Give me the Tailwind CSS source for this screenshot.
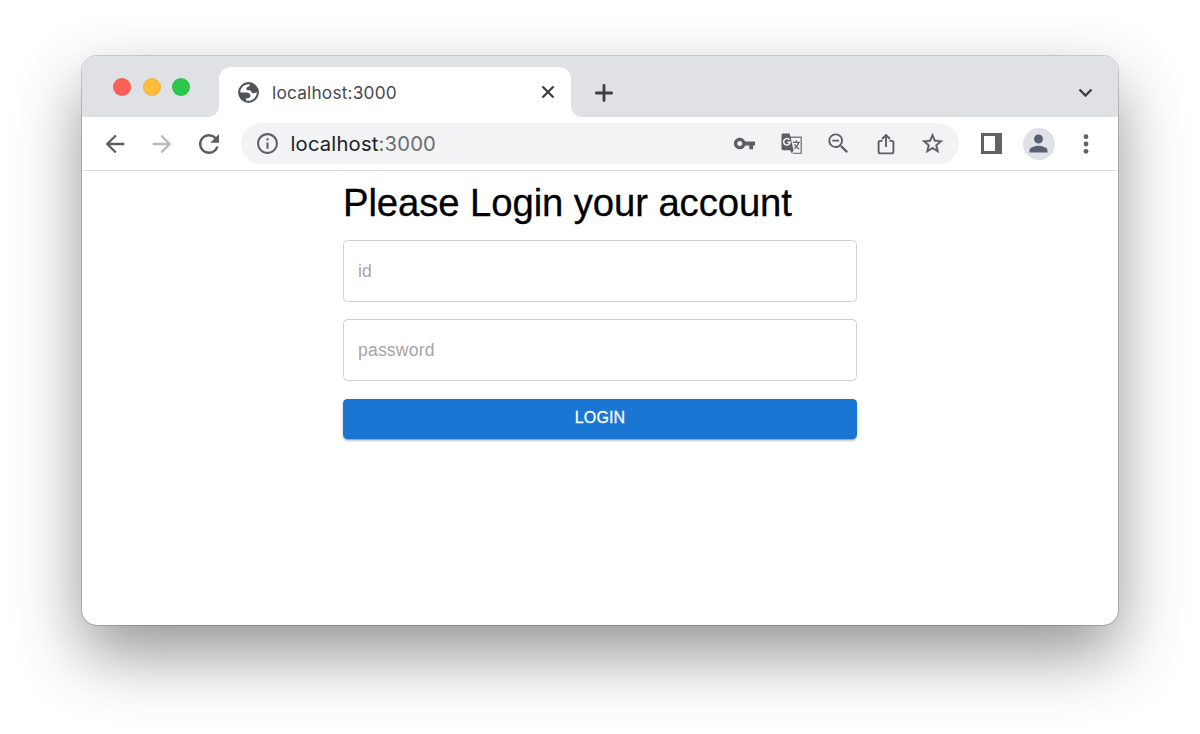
<!DOCTYPE html>
<html lang="en">
<head>
  <meta charset="UTF-8" />
  <meta name="viewport" content="width=device-width, initial-scale=1.0" />
  <title>localhost:3000</title>
  <script src="https://cdn.jsdelivr.net/npm/@tailwindcss/browser@4"></script>
</head>
<body class="bg-white h-[734px] overflow-hidden px-[82px] pt-[56px]">
  <!-- Browser window -->
  <div class="h-[569px] rounded-[15px] overflow-hidden bg-white flex flex-col shadow-[0_0_0_1px_rgba(0,0,0,0.17),0_29px_66px_rgba(0,0,0,0.42)] font-['Inter',sans-serif]">

    <!-- Tab strip -->
    <div class="flex h-[61px] shrink-0">
      <div class="w-[137px] bg-[#dfe1e5] rounded-br-[11px] flex gap-[11.5px] pl-[31px] pt-[22px]">
        <span class="size-[18px] rounded-full bg-[#ff5f57] border border-[#e2544c]/40"></span>
        <span class="size-[18px] rounded-full bg-[#febc3b] border border-[#dda035]/40"></span>
        <span class="size-[18px] rounded-full bg-[#2bc84c] border border-[#25ac40]/40"></span>
      </div>
      <div class="w-[352px] h-[30px] bg-[#dfe1e5] pt-[11px]">
        <div class="h-[50px] bg-white rounded-t-[12px] flex items-center pl-[17px] pr-[16px]">
          <svg class="size-[25px]" viewBox="0 0 24 24">
            <circle cx="12" cy="12" r="10" fill="#50535a"/>
            <path d="M4 12A8 8 0 0 1 13.500 4.200c-.200 1.200-.900 2-2.200 2.400-1.500.400-1.500 1.300-1.300 2.200.200.900 1 1 2.200 1 1.400 0 2.200.600 2.500 1.500.400 1.200 1.500 1.600 2.800 1.400.900-.200 1.700-.700 2.400-1.200A8 8 0 0 1 9.700 19.700v-2.300h1.500c1.600 0 2.700-.900 2.700-2.400 0-1.900-1.700-3-4.200-3z" fill="#fff"/>
          </svg>
          <span class="ml-[11px] mt-px text-[17.3px] leading-6 tracking-[0.19px] text-[#45494d] grow">localhost:3000</span>
          <svg class="size-[14px]" viewBox="0 0 14 14" fill="none" stroke="#3c4043" stroke-width="2.3"><path d="M1.500 1.500l11 11M12.500 1.500l-11 11"/></svg>
        </div>
      </div>
      <div class="grow bg-[#dfe1e5] rounded-bl-[11px] flex items-center justify-between pl-[23.5px] pr-[25px] pt-[12px]">
        <svg class="size-[18px]" viewBox="0 0 18 18" fill="none" stroke="#3c4043" stroke-width="2.800" stroke-linecap="round"><path d="M9 1.400v15.200M1.400 9h15.200"/></svg>
        <svg class="w-[15px] h-[10px]" viewBox="0 0 15 10" fill="none" stroke="#3c4043" stroke-width="2.400"><path d="M1.500 1.500l6 6 6-6"/></svg>
      </div>
    </div>

    <!-- Toolbar -->
    <div class="flex items-center h-[54px] shrink-0 pl-[9px] border-b border-[#dcdcdc]">
      <div class="w-[47px] flex justify-center">
        <svg class="size-[28px]" viewBox="0 0 24 24" fill="#5b5e63"><path d="M20 11H7.830l5.590-5.590L12 4l-8 8 8 8 1.410-1.410L7.830 13H20v-2z"/></svg>
      </div>
      <div class="w-[47px] flex justify-center">
        <svg class="size-[28px]" viewBox="0 0 24 24" fill="#b9babd"><path d="M12 4l-1.410 1.410L16.170 11H4v2h12.170l-5.580 5.590L12 20l8-8z"/></svg>
      </div>
      <div class="w-[47px] flex justify-center">
        <svg class="size-[30px]" viewBox="0 0 24 24" fill="#5b5e63"><path d="M17.650 6.350A7.958 7.958 0 0 0 12 4c-4.420 0-7.990 3.580-7.990 8s3.570 8 7.990 8c3.730 0 6.840-2.550 7.730-6h-2.080A5.990 5.990 0 0 1 12 18c-3.310 0-6-2.690-6-6s2.690-6 6-6c1.660 0 3.140.690 4.220 1.780L13 11h7V4l-2.350 2.350z"/></svg>
      </div>

      <div class="ml-[9px] w-[718px] h-[41px] rounded-full bg-[#f1f3f4] flex items-center pl-[14px] pr-[3px]">
        <svg class="size-[25px]" viewBox="0 0 24 24" fill="#5f6368"><path d="M11 7h2v2h-2zm0 4h2v6h-2zm1-9C6.480 2 2 6.480 2 12s4.480 10 10 10 10-4.480 10-10S17.520 2 12 2zm0 18c-4.410 0-8-3.590-8-8s3.590-8 8-8 8 3.590 8 8-3.590 8-8 8z"/></svg>
        <span class="ml-[10.5px] text-[20.2px] leading-7 tracking-[0.2px] text-[#202124] grow">localhost<span class="text-[#6a6d70]">:3000</span></span>
        <div class="w-[47px] flex justify-center">
          <svg class="size-[23px]" viewBox="0 0 24 24" fill="#5c5f62"><path d="M12.650 10A5.990 5.990 0 0 0 7 6c-3.310 0-6 2.690-6 6s2.690 6 6 6a5.990 5.990 0 0 0 5.650-4H17v4h4v-4h2v-4H12.650zM7 14.600c-1.400 0-2.600-1.200-2.600-2.600s1.200-2.600 2.600-2.600 2.600 1.200 2.600 2.600-1.200 2.600-2.600 2.600z"/></svg>
        </div>
        <div class="w-[47px] flex justify-center">
          <svg class="size-[22px]" viewBox="0 0 22 22">
            <path d="M9 4.200h11.200v16.200h-8.400" fill="none" stroke="#7c7f82" stroke-width="1.400"/>
            <path d="M2.200.500h6.500l3.800 16.800H2.200c-.900 0-1.700-.700-1.700-1.700V2.200C.500 1.200 1.200.500 2.200.500zM9 17.300h3.500l-1.600 3.200z" fill="#5c5f62"/>
            <path d="M8.600 6.800a3.300 3.300 0 1 0 .600 2.400H6.300" fill="none" stroke="#f1f3f4" stroke-width="1.500"/>
            <path d="M11.800 9.400h7M15.300 7.600v1.800M17.700 9.400c-.500 2.600-2.200 4.800-4.300 6.400M13.500 11.200c.900 2 2.600 3.700 4.700 5" fill="none" stroke="#65686b" stroke-width="1.400"/>
          </svg>
        </div>
        <div class="w-[47px] flex justify-center">
          <svg class="size-[27px]" viewBox="0 0 24 24" fill="#5c5f62"><path d="M15.500 14h-.790l-.280-.270A6.471 6.471 0 0 0 16 9.500 6.500 6.500 0 1 0 9.500 16c1.610 0 3.090-.590 4.230-1.570l.270.280v.790l5 4.990L20.490 19l-4.990-5zm-6 .300C6.800 14.300 4.700 12.200 4.700 9.500S6.800 4.700 9.500 4.700s4.800 2.100 4.800 4.800-2.100 4.800-4.800 4.800zM6.500 8.700h6v1.500h-6z"/></svg>
        </div>
        <div class="w-[47px] flex justify-center">
          <svg class="size-[22px]" viewBox="0 0 22 22" fill="none" stroke="#5c5f62" stroke-width="1.900"><path d="M7.500 7.900H5.200c-.900 0-1.600.700-1.600 1.600v9.300c0 .900.700 1.600 1.600 1.600h11.600c.900 0 1.600-.700 1.600-1.600V9.500c0-.900-.700-1.600-1.600-1.600h-2.300M11 14V2.400M7 6l4-4 4 4"/></svg>
        </div>
        <div class="w-[47px] flex justify-center">
          <svg class="size-[25px]" viewBox="0 0 24 24" fill="#5c5f62" stroke="#5c5f62" stroke-width="0.300"><path d="M22 9.240l-7.190-.620L12 2 9.190 8.630 2 9.240l5.460 4.730L5.820 21 12 17.270 18.180 21l-1.630-7.030L22 9.240zM12 15.400l-3.760 2.270 1-4.280-3.320-2.880 4.380-.380L12 6.100l1.710 4.040 4.380.380-3.320 2.880 1 4.280L12 15.400z"/></svg>
        </div>
      </div>

      <div class="ml-[9px] w-[47px] flex justify-center">
        <div class="w-[21px] h-[21px] border-[3px] border-[#5f6368] border-r-[7px]"></div>
      </div>
      <div class="w-[47px] flex justify-center">
        <div class="size-[32px] rounded-full bg-[#dfe1e6] flex items-center justify-center">
          <svg class="size-[27px]" viewBox="0 0 24 24" fill="#566173"><path d="M12 12c2.210 0 4-1.790 4-4s-1.790-4-4-4-4 1.790-4 4 1.790 4 4 4zm0 2c-2.670 0-8 1.340-8 4v2h16v-2c0-2.660-5.330-4-8-4z"/></svg>
        </div>
      </div>
      <div class="w-[47px] flex justify-center">
        <svg class="w-[6px] h-[20px]" viewBox="0 0 6 20" fill="#5f6368"><circle cx="3" cy="2.700" r="2.400"/><circle cx="3" cy="10" r="2.400"/><circle cx="3" cy="17.300" r="2.400"/></svg>
      </div>
    </div>

    <!-- Login page -->
    <main class="w-[514px] mx-auto pt-[9px] font-['Liberation_Sans',Arial,sans-serif]">
      <h1 class="text-[38.3px] leading-[46px] tracking-[-0.1px] text-black whitespace-nowrap [-webkit-text-stroke:0.3px_#000]">Please Login your account</h1>
      <form class="mt-[14px] flex flex-col">
        <input type="text" placeholder="id" class="h-[62px] px-[14px] border border-[#d0d0d0] rounded-[4.5px] text-[17.6px] tracking-[0.165px] placeholder:text-[#a5a5a5]" />
        <input type="password" placeholder="password" class="mt-[17px] h-[62px] px-[14px] border border-[#d0d0d0] rounded-[4.5px] text-[17.6px] tracking-[0.165px] placeholder:text-[#a5a5a5]" />
        <button type="button" class="mt-[18px] h-[40px] pb-[2px] rounded-[4.5px] bg-[#1976d2] text-white text-[16px] font-medium tracking-[0.1px] [-webkit-text-stroke:0.3px_#fff] shadow-[0_3px_1px_-2px_rgba(0,0,0,0.2),0_2px_2px_0_rgba(0,0,0,0.14),0_1px_5px_0_rgba(0,0,0,0.12)]">LOGIN</button>
      </form>
    </main>
  </div>
</body>
</html>
